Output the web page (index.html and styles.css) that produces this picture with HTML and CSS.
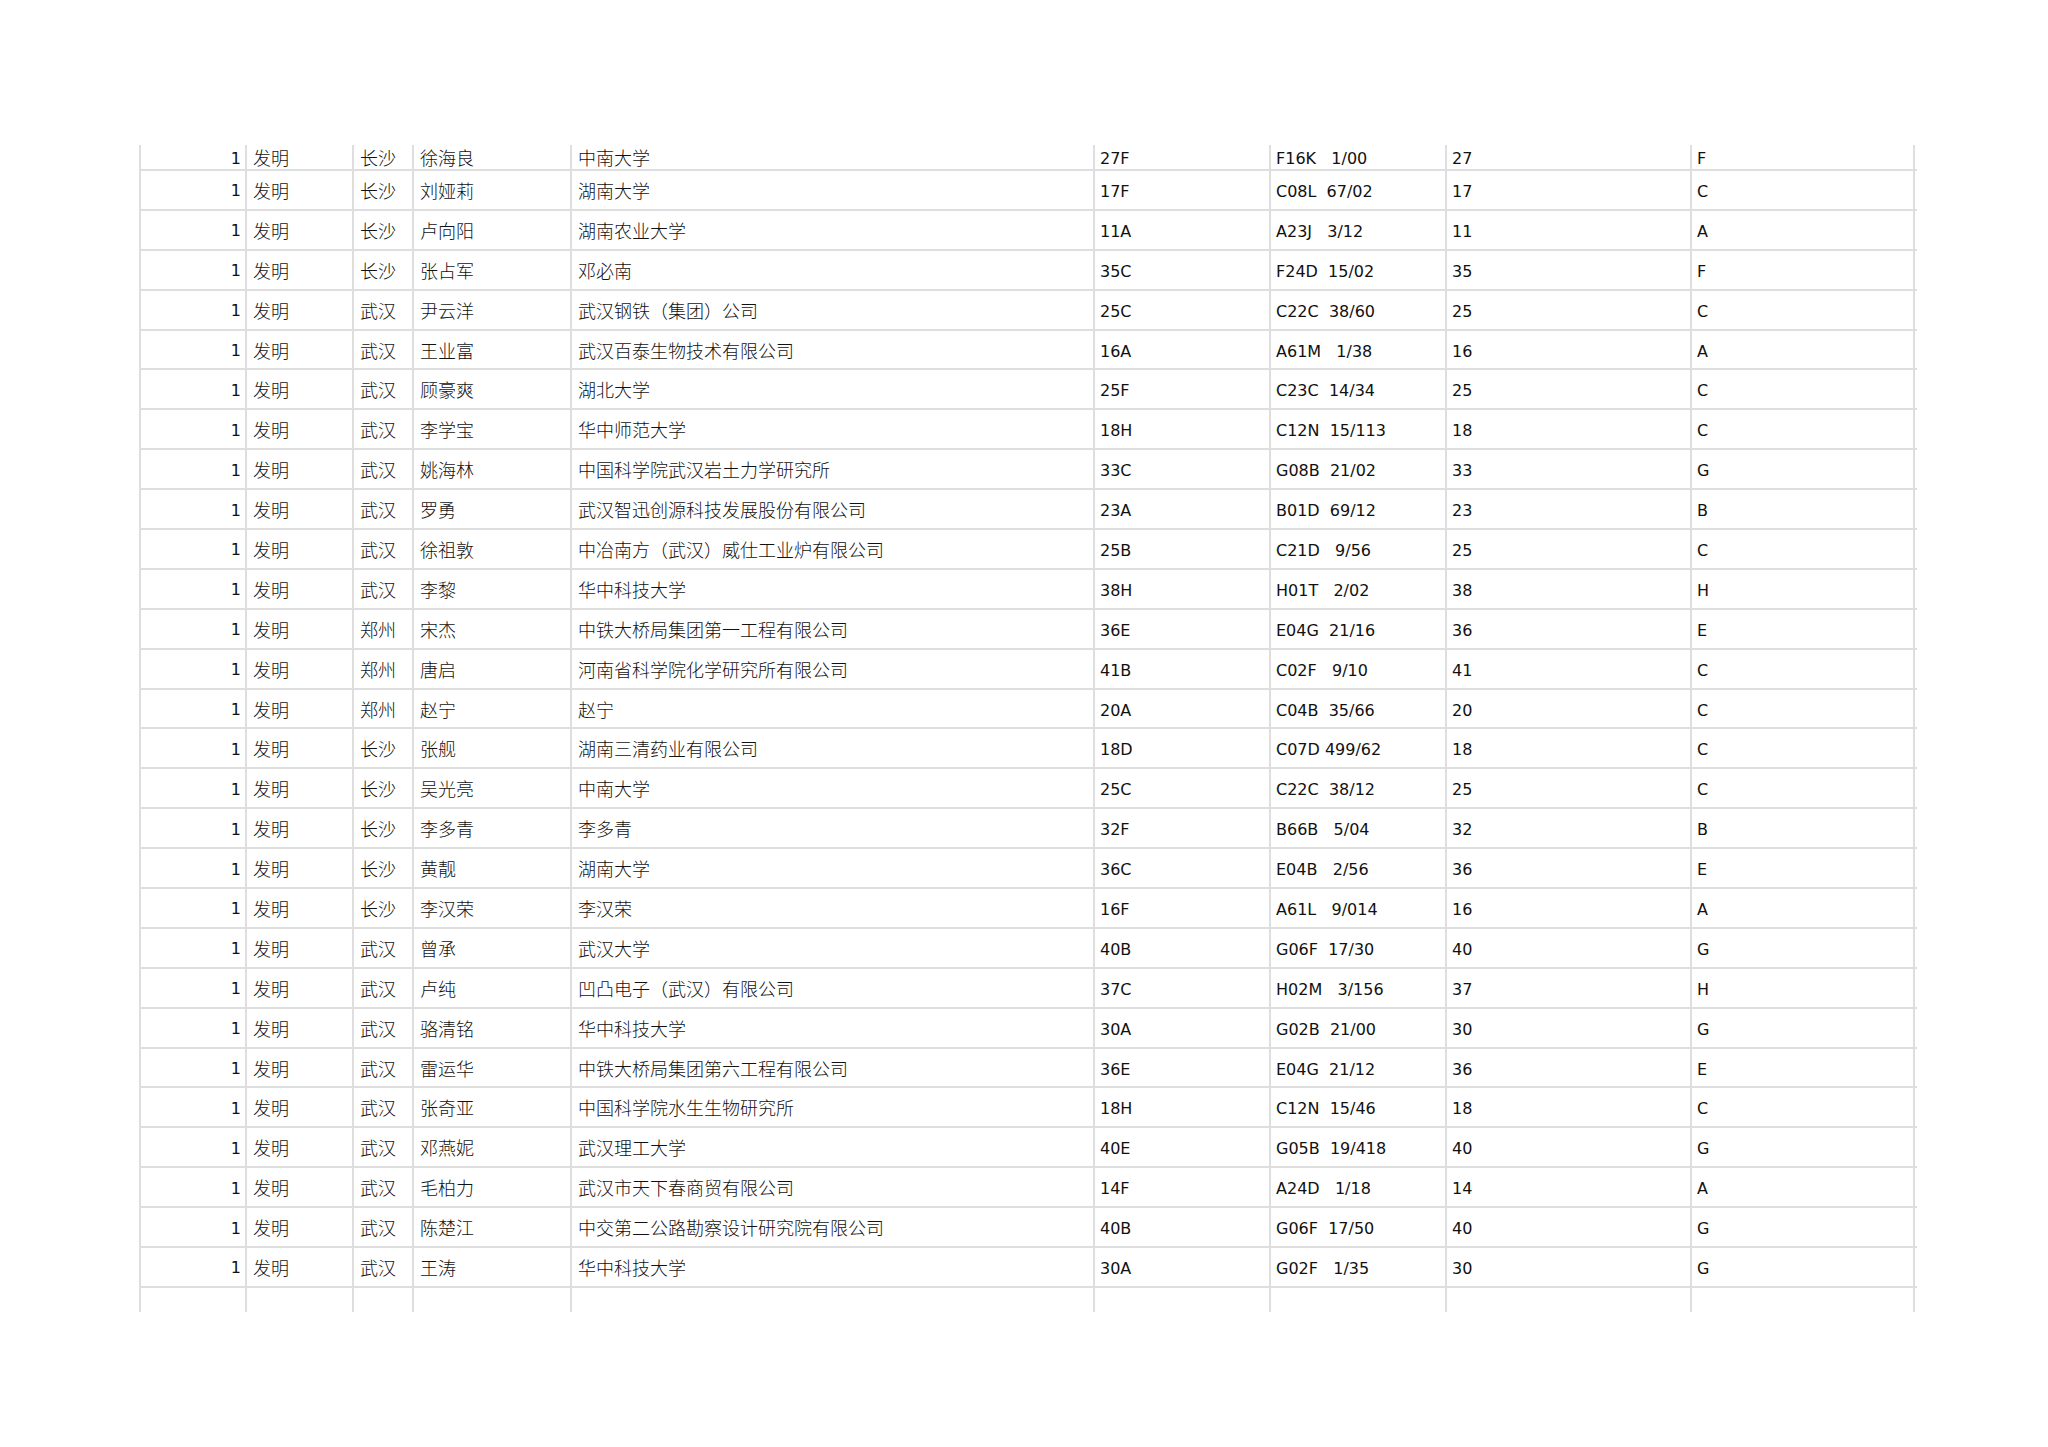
FILE: index.html
```html
<!DOCTYPE html>
<html lang="zh">
<head>
<meta charset="utf-8">
<title>表</title>
<link rel="stylesheet" href="styles.css">
</head>
<body>
<div class="page">
  <div class="sheet">
    <div class="row first"><div class="c n">1</div><div class="c z">发明</div><div class="c z">长沙</div><div class="c z">徐海良</div><div class="c z">中南大学</div><div class="c l">27F</div><div class="c l ipc">F16K   1/00</div><div class="c l">27</div><div class="c l">F</div></div>
    <div class="row"><div class="c n">1</div><div class="c z">发明</div><div class="c z">长沙</div><div class="c z">刘娅莉</div><div class="c z">湖南大学</div><div class="c l">17F</div><div class="c l ipc">C08L  67/02</div><div class="c l">17</div><div class="c l">C</div></div>
    <div class="row"><div class="c n">1</div><div class="c z">发明</div><div class="c z">长沙</div><div class="c z">卢向阳</div><div class="c z">湖南农业大学</div><div class="c l">11A</div><div class="c l ipc">A23J   3/12</div><div class="c l">11</div><div class="c l">A</div></div>
    <div class="row"><div class="c n">1</div><div class="c z">发明</div><div class="c z">长沙</div><div class="c z">张占军</div><div class="c z">邓必南</div><div class="c l">35C</div><div class="c l ipc">F24D  15/02</div><div class="c l">35</div><div class="c l">F</div></div>
    <div class="row"><div class="c n">1</div><div class="c z">发明</div><div class="c z">武汉</div><div class="c z">尹云洋</div><div class="c z">武汉钢铁（集团）公司</div><div class="c l">25C</div><div class="c l ipc">C22C  38/60</div><div class="c l">25</div><div class="c l">C</div></div>
    <div class="row"><div class="c n">1</div><div class="c z">发明</div><div class="c z">武汉</div><div class="c z">王业富</div><div class="c z">武汉百泰生物技术有限公司</div><div class="c l">16A</div><div class="c l ipc">A61M   1/38</div><div class="c l">16</div><div class="c l">A</div></div>
    <div class="row"><div class="c n">1</div><div class="c z">发明</div><div class="c z">武汉</div><div class="c z">顾豪爽</div><div class="c z">湖北大学</div><div class="c l">25F</div><div class="c l ipc">C23C  14/34</div><div class="c l">25</div><div class="c l">C</div></div>
    <div class="row"><div class="c n">1</div><div class="c z">发明</div><div class="c z">武汉</div><div class="c z">李学宝</div><div class="c z">华中师范大学</div><div class="c l">18H</div><div class="c l ipc">C12N  15/113</div><div class="c l">18</div><div class="c l">C</div></div>
    <div class="row"><div class="c n">1</div><div class="c z">发明</div><div class="c z">武汉</div><div class="c z">姚海林</div><div class="c z">中国科学院武汉岩土力学研究所</div><div class="c l">33C</div><div class="c l ipc">G08B  21/02</div><div class="c l">33</div><div class="c l">G</div></div>
    <div class="row"><div class="c n">1</div><div class="c z">发明</div><div class="c z">武汉</div><div class="c z">罗勇</div><div class="c z">武汉智迅创源科技发展股份有限公司</div><div class="c l">23A</div><div class="c l ipc">B01D  69/12</div><div class="c l">23</div><div class="c l">B</div></div>
    <div class="row"><div class="c n">1</div><div class="c z">发明</div><div class="c z">武汉</div><div class="c z">徐祖敦</div><div class="c z">中冶南方（武汉）威仕工业炉有限公司</div><div class="c l">25B</div><div class="c l ipc">C21D   9/56</div><div class="c l">25</div><div class="c l">C</div></div>
    <div class="row"><div class="c n">1</div><div class="c z">发明</div><div class="c z">武汉</div><div class="c z">李黎</div><div class="c z">华中科技大学</div><div class="c l">38H</div><div class="c l ipc">H01T   2/02</div><div class="c l">38</div><div class="c l">H</div></div>
    <div class="row"><div class="c n">1</div><div class="c z">发明</div><div class="c z">郑州</div><div class="c z">宋杰</div><div class="c z">中铁大桥局集团第一工程有限公司</div><div class="c l">36E</div><div class="c l ipc">E04G  21/16</div><div class="c l">36</div><div class="c l">E</div></div>
    <div class="row"><div class="c n">1</div><div class="c z">发明</div><div class="c z">郑州</div><div class="c z">唐启</div><div class="c z">河南省科学院化学研究所有限公司</div><div class="c l">41B</div><div class="c l ipc">C02F   9/10</div><div class="c l">41</div><div class="c l">C</div></div>
    <div class="row"><div class="c n">1</div><div class="c z">发明</div><div class="c z">郑州</div><div class="c z">赵宁</div><div class="c z">赵宁</div><div class="c l">20A</div><div class="c l ipc">C04B  35/66</div><div class="c l">20</div><div class="c l">C</div></div>
    <div class="row"><div class="c n">1</div><div class="c z">发明</div><div class="c z">长沙</div><div class="c z">张舰</div><div class="c z">湖南三清药业有限公司</div><div class="c l">18D</div><div class="c l ipc">C07D 499/62</div><div class="c l">18</div><div class="c l">C</div></div>
    <div class="row"><div class="c n">1</div><div class="c z">发明</div><div class="c z">长沙</div><div class="c z">吴光亮</div><div class="c z">中南大学</div><div class="c l">25C</div><div class="c l ipc">C22C  38/12</div><div class="c l">25</div><div class="c l">C</div></div>
    <div class="row"><div class="c n">1</div><div class="c z">发明</div><div class="c z">长沙</div><div class="c z">李多青</div><div class="c z">李多青</div><div class="c l">32F</div><div class="c l ipc">B66B   5/04</div><div class="c l">32</div><div class="c l">B</div></div>
    <div class="row"><div class="c n">1</div><div class="c z">发明</div><div class="c z">长沙</div><div class="c z">黄靓</div><div class="c z">湖南大学</div><div class="c l">36C</div><div class="c l ipc">E04B   2/56</div><div class="c l">36</div><div class="c l">E</div></div>
    <div class="row"><div class="c n">1</div><div class="c z">发明</div><div class="c z">长沙</div><div class="c z">李汉荣</div><div class="c z">李汉荣</div><div class="c l">16F</div><div class="c l ipc">A61L   9/014</div><div class="c l">16</div><div class="c l">A</div></div>
    <div class="row"><div class="c n">1</div><div class="c z">发明</div><div class="c z">武汉</div><div class="c z">曾承</div><div class="c z">武汉大学</div><div class="c l">40B</div><div class="c l ipc">G06F  17/30</div><div class="c l">40</div><div class="c l">G</div></div>
    <div class="row"><div class="c n">1</div><div class="c z">发明</div><div class="c z">武汉</div><div class="c z">卢纯</div><div class="c z">凹凸电子（武汉）有限公司</div><div class="c l">37C</div><div class="c l ipc">H02M   3/156</div><div class="c l">37</div><div class="c l">H</div></div>
    <div class="row"><div class="c n">1</div><div class="c z">发明</div><div class="c z">武汉</div><div class="c z">骆清铭</div><div class="c z">华中科技大学</div><div class="c l">30A</div><div class="c l ipc">G02B  21/00</div><div class="c l">30</div><div class="c l">G</div></div>
    <div class="row"><div class="c n">1</div><div class="c z">发明</div><div class="c z">武汉</div><div class="c z">雷运华</div><div class="c z">中铁大桥局集团第六工程有限公司</div><div class="c l">36E</div><div class="c l ipc">E04G  21/12</div><div class="c l">36</div><div class="c l">E</div></div>
    <div class="row"><div class="c n">1</div><div class="c z">发明</div><div class="c z">武汉</div><div class="c z">张奇亚</div><div class="c z">中国科学院水生生物研究所</div><div class="c l">18H</div><div class="c l ipc">C12N  15/46</div><div class="c l">18</div><div class="c l">C</div></div>
    <div class="row"><div class="c n">1</div><div class="c z">发明</div><div class="c z">武汉</div><div class="c z">邓燕妮</div><div class="c z">武汉理工大学</div><div class="c l">40E</div><div class="c l ipc">G05B  19/418</div><div class="c l">40</div><div class="c l">G</div></div>
    <div class="row"><div class="c n">1</div><div class="c z">发明</div><div class="c z">武汉</div><div class="c z">毛柏力</div><div class="c z">武汉市天下春商贸有限公司</div><div class="c l">14F</div><div class="c l ipc">A24D   1/18</div><div class="c l">14</div><div class="c l">A</div></div>
    <div class="row"><div class="c n">1</div><div class="c z">发明</div><div class="c z">武汉</div><div class="c z">陈楚江</div><div class="c z">中交第二公路勘察设计研究院有限公司</div><div class="c l">40B</div><div class="c l ipc">G06F  17/50</div><div class="c l">40</div><div class="c l">G</div></div>
    <div class="row"><div class="c n">1</div><div class="c z">发明</div><div class="c z">武汉</div><div class="c z">王涛</div><div class="c z">华中科技大学</div><div class="c l">30A</div><div class="c l ipc">G02F   1/35</div><div class="c l">30</div><div class="c l">G</div></div>
    <div class="row last"><div class="c"></div><div class="c"></div><div class="c"></div><div class="c"></div><div class="c"></div><div class="c"></div><div class="c"></div><div class="c"></div><div class="c"></div></div>
  </div>
</div>
</body>
</html>
```

FILE: styles.css
```css
html, body {
  margin: 0;
  padding: 0;
  background: #ffffff;
}

.page {
  width: 2048px;
  height: 1447px;
  padding: 145px 0 0 139px;
  box-sizing: border-box;
}

.sheet {
  width: 1776px;
  border-left: 2px solid #dedede;
  display: flex;
  flex-direction: column;
}

.row {
  display: grid;
  grid-template-columns: 106px 107px 60px 158px 523px 176px 176px 245px 223px;
  height: 39.9px;
  box-sizing: border-box;
  border-bottom: 2px solid #dedede;
}

.row.first {
  height: 26px;
}

.row.last {
  height: 24px;
  border-bottom: none;
}

.c {
  box-sizing: border-box;
  border-right: 2px solid #dedede;
  display: flex;
  align-items: center;
  overflow: hidden;
  white-space: nowrap;
  color: #111;
}

.c.n {
  justify-content: flex-end;
  padding-right: 4px;
  font-family: "DejaVu Sans", Verdana, sans-serif;
  font-size: 16px;
  padding-top: 2px;
}

.c.z {
  padding-left: 6px;
  font-family: "Noto Sans CJK SC", "Noto Sans", sans-serif;
  font-size: 18px;
  font-weight: 300;
}

.c.l {
  padding-left: 5px;
  padding-top: 3px;
  font-family: "DejaVu Sans", Verdana, sans-serif;
  font-size: 16px;
}

.c.ipc {
  white-space: pre;
}
```
